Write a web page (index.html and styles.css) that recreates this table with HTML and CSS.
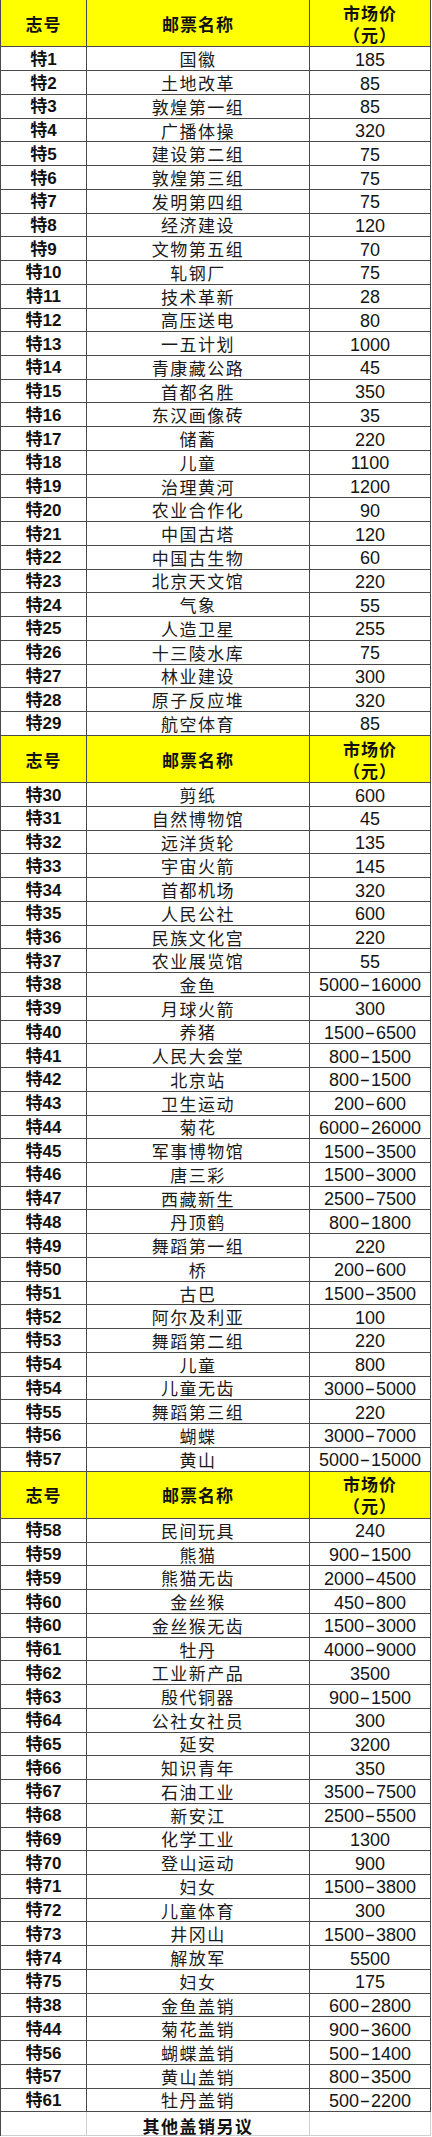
FILE: index.html
```html
<!DOCTYPE html>
<html lang="zh-CN">
<head>
<meta charset="utf-8">
<title>特字头邮票市场价</title>
<link rel="stylesheet" href="styles.css">
</head>
<body>
<div class="sheet">
  <div class="cell head">志号</div><div class="cell head">邮票名称</div><div class="cell head head-price"><span>市场价</span><span>（元）</span></div>
  <div class="cell code">特1</div><div class="cell name">国徽</div><div class="cell price">185</div>
  <div class="cell code">特2</div><div class="cell name">土地改革</div><div class="cell price">85</div>
  <div class="cell code">特3</div><div class="cell name">敦煌第一组</div><div class="cell price">85</div>
  <div class="cell code">特4</div><div class="cell name">广播体操</div><div class="cell price">320</div>
  <div class="cell code">特5</div><div class="cell name">建设第二组</div><div class="cell price">75</div>
  <div class="cell code">特6</div><div class="cell name">敦煌第三组</div><div class="cell price">75</div>
  <div class="cell code">特7</div><div class="cell name">发明第四组</div><div class="cell price">75</div>
  <div class="cell code">特8</div><div class="cell name">经济建设</div><div class="cell price">120</div>
  <div class="cell code">特9</div><div class="cell name">文物第五组</div><div class="cell price">70</div>
  <div class="cell code">特10</div><div class="cell name">轧钢厂</div><div class="cell price">75</div>
  <div class="cell code">特11</div><div class="cell name">技术革新</div><div class="cell price">28</div>
  <div class="cell code">特12</div><div class="cell name">高压送电</div><div class="cell price">80</div>
  <div class="cell code">特13</div><div class="cell name">一五计划</div><div class="cell price">1000</div>
  <div class="cell code">特14</div><div class="cell name">青康藏公路</div><div class="cell price">45</div>
  <div class="cell code">特15</div><div class="cell name">首都名胜</div><div class="cell price">350</div>
  <div class="cell code">特16</div><div class="cell name">东汉画像砖</div><div class="cell price">35</div>
  <div class="cell code">特17</div><div class="cell name">储蓄</div><div class="cell price">220</div>
  <div class="cell code">特18</div><div class="cell name">儿童</div><div class="cell price">1100</div>
  <div class="cell code">特19</div><div class="cell name">治理黄河</div><div class="cell price">1200</div>
  <div class="cell code">特20</div><div class="cell name">农业合作化</div><div class="cell price">90</div>
  <div class="cell code">特21</div><div class="cell name">中国古塔</div><div class="cell price">120</div>
  <div class="cell code">特22</div><div class="cell name">中国古生物</div><div class="cell price">60</div>
  <div class="cell code">特23</div><div class="cell name">北京天文馆</div><div class="cell price">220</div>
  <div class="cell code">特24</div><div class="cell name">气象</div><div class="cell price">55</div>
  <div class="cell code">特25</div><div class="cell name">人造卫星</div><div class="cell price">255</div>
  <div class="cell code">特26</div><div class="cell name">十三陵水库</div><div class="cell price">75</div>
  <div class="cell code">特27</div><div class="cell name">林业建设</div><div class="cell price">300</div>
  <div class="cell code">特28</div><div class="cell name">原子反应堆</div><div class="cell price">320</div>
  <div class="cell code">特29</div><div class="cell name">航空体育</div><div class="cell price">85</div>

  <div class="cell head">志号</div><div class="cell head">邮票名称</div><div class="cell head head-price"><span>市场价</span><span>（元）</span></div>
  <div class="cell code">特30</div><div class="cell name">剪纸</div><div class="cell price">600</div>
  <div class="cell code">特31</div><div class="cell name">自然博物馆</div><div class="cell price">45</div>
  <div class="cell code">特32</div><div class="cell name">远洋货轮</div><div class="cell price">135</div>
  <div class="cell code">特33</div><div class="cell name">宇宙火箭</div><div class="cell price">145</div>
  <div class="cell code">特34</div><div class="cell name">首都机场</div><div class="cell price">320</div>
  <div class="cell code">特35</div><div class="cell name">人民公社</div><div class="cell price">600</div>
  <div class="cell code">特36</div><div class="cell name">民族文化宫</div><div class="cell price">220</div>
  <div class="cell code">特37</div><div class="cell name">农业展览馆</div><div class="cell price">55</div>
  <div class="cell code">特38</div><div class="cell name">金鱼</div><div class="cell price">5000<span class="dash">-</span>16000</div>
  <div class="cell code">特39</div><div class="cell name">月球火箭</div><div class="cell price">300</div>
  <div class="cell code">特40</div><div class="cell name">养猪</div><div class="cell price">1500<span class="dash">-</span>6500</div>
  <div class="cell code">特41</div><div class="cell name">人民大会堂</div><div class="cell price">800<span class="dash">-</span>1500</div>
  <div class="cell code">特42</div><div class="cell name">北京站</div><div class="cell price">800<span class="dash">-</span>1500</div>
  <div class="cell code">特43</div><div class="cell name">卫生运动</div><div class="cell price">200<span class="dash">-</span>600</div>
  <div class="cell code">特44</div><div class="cell name">菊花</div><div class="cell price">6000<span class="dash">-</span>26000</div>
  <div class="cell code">特45</div><div class="cell name">军事博物馆</div><div class="cell price">1500<span class="dash">-</span>3500</div>
  <div class="cell code">特46</div><div class="cell name">唐三彩</div><div class="cell price">1500<span class="dash">-</span>3000</div>
  <div class="cell code">特47</div><div class="cell name">西藏新生</div><div class="cell price">2500<span class="dash">-</span>7500</div>
  <div class="cell code">特48</div><div class="cell name">丹顶鹤</div><div class="cell price">800<span class="dash">-</span>1800</div>
  <div class="cell code">特49</div><div class="cell name">舞蹈第一组</div><div class="cell price">220</div>
  <div class="cell code">特50</div><div class="cell name">桥</div><div class="cell price">200<span class="dash">-</span>600</div>
  <div class="cell code">特51</div><div class="cell name">古巴</div><div class="cell price">1500<span class="dash">-</span>3500</div>
  <div class="cell code">特52</div><div class="cell name">阿尔及利亚</div><div class="cell price">100</div>
  <div class="cell code">特53</div><div class="cell name">舞蹈第二组</div><div class="cell price">220</div>
  <div class="cell code">特54</div><div class="cell name">儿童</div><div class="cell price">800</div>
  <div class="cell code">特54</div><div class="cell name">儿童无齿</div><div class="cell price">3000<span class="dash">-</span>5000</div>
  <div class="cell code">特55</div><div class="cell name">舞蹈第三组</div><div class="cell price">220</div>
  <div class="cell code">特56</div><div class="cell name">蝴蝶</div><div class="cell price">3000<span class="dash">-</span>7000</div>
  <div class="cell code">特57</div><div class="cell name">黄山</div><div class="cell price">5000<span class="dash">-</span>15000</div>

  <div class="cell head">志号</div><div class="cell head">邮票名称</div><div class="cell head head-price"><span>市场价</span><span>（元）</span></div>
  <div class="cell code">特58</div><div class="cell name">民间玩具</div><div class="cell price">240</div>
  <div class="cell code">特59</div><div class="cell name">熊猫</div><div class="cell price">900<span class="dash">-</span>1500</div>
  <div class="cell code">特59</div><div class="cell name">熊猫无齿</div><div class="cell price">2000<span class="dash">-</span>4500</div>
  <div class="cell code">特60</div><div class="cell name">金丝猴</div><div class="cell price">450<span class="dash">-</span>800</div>
  <div class="cell code">特60</div><div class="cell name">金丝猴无齿</div><div class="cell price">1500<span class="dash">-</span>3000</div>
  <div class="cell code">特61</div><div class="cell name">牡丹</div><div class="cell price">4000<span class="dash">-</span>9000</div>
  <div class="cell code">特62</div><div class="cell name">工业新产品</div><div class="cell price">3500</div>
  <div class="cell code">特63</div><div class="cell name">殷代铜器</div><div class="cell price">900<span class="dash">-</span>1500</div>
  <div class="cell code">特64</div><div class="cell name">公社女社员</div><div class="cell price">300</div>
  <div class="cell code">特65</div><div class="cell name">延安</div><div class="cell price">3200</div>
  <div class="cell code">特66</div><div class="cell name">知识青年</div><div class="cell price">350</div>
  <div class="cell code">特67</div><div class="cell name">石油工业</div><div class="cell price">3500<span class="dash">-</span>7500</div>
  <div class="cell code">特68</div><div class="cell name">新安江</div><div class="cell price">2500<span class="dash">-</span>5500</div>
  <div class="cell code">特69</div><div class="cell name">化学工业</div><div class="cell price">1300</div>
  <div class="cell code">特70</div><div class="cell name">登山运动</div><div class="cell price">900</div>
  <div class="cell code">特71</div><div class="cell name">妇女</div><div class="cell price">1500<span class="dash">-</span>3800</div>
  <div class="cell code">特72</div><div class="cell name">儿童体育</div><div class="cell price">300</div>
  <div class="cell code">特73</div><div class="cell name">井冈山</div><div class="cell price">1500<span class="dash">-</span>3800</div>
  <div class="cell code">特74</div><div class="cell name">解放军</div><div class="cell price">5500</div>
  <div class="cell code">特75</div><div class="cell name">妇女</div><div class="cell price">175</div>
  <div class="cell code">特38</div><div class="cell name">金鱼盖销</div><div class="cell price">600<span class="dash">-</span>2800</div>
  <div class="cell code">特44</div><div class="cell name">菊花盖销</div><div class="cell price">900<span class="dash">-</span>3600</div>
  <div class="cell code">特56</div><div class="cell name">蝴蝶盖销</div><div class="cell price">500<span class="dash">-</span>1400</div>
  <div class="cell code">特57</div><div class="cell name">黄山盖销</div><div class="cell price">800<span class="dash">-</span>3500</div>
  <div class="cell code">特61</div><div class="cell name">牡丹盖销</div><div class="cell price">500<span class="dash">-</span>2200</div>
  <div class="cell foot"></div><div class="cell foot note">其他盖销另议</div><div class="cell foot"></div>
</div>
</body>
</html>
```
FILE: styles.css
```css
html, body {
  margin: 0;
  padding: 0;
  background: #ffffff;
}

.sheet {
  display: grid;
  grid-template-columns: 86px 223px 121px;
  grid-auto-rows: 23.74px;
  width: 430px;
  border-left: 1px solid #4a4a4a;
  color: #111;
  font-family: "Liberation Sans", "Noto Sans CJK SC", sans-serif;
}

.cell {
  box-sizing: border-box;
  display: flex;
  align-items: center;
  justify-content: center;
  border-right: 1px solid #4a4a4a;
  border-bottom: 1px solid #4a4a4a;
  white-space: nowrap;
  line-height: 18px;
}

.head {
  grid-row: span 2;
  background: #ffff00;
  font-family: "Noto Sans CJK SC", sans-serif;
  font-weight: 700;
  font-size: 17px;
  letter-spacing: 1px;
  padding-top: 1px;
}

.head-price {
  flex-direction: column;
  line-height: 22px;
}

.code {
  font-weight: 700;
  font-size: 17px;
  padding-top: 2px;
}

.name {
  font-family: "Noto Sans CJK SC", sans-serif;
  font-size: 17px;
  letter-spacing: 1.5px;
  color: #1a1a1a;
  padding-top: 1px;
}

.price {
  font-size: 18px;
  color: #151515;
  padding-top: 2px;
}

.dash {
  display: inline-block;
  width: 12px;
  text-align: center;
  transform: scaleX(1.8);
}

.foot {
  border-right-color: #cfcfcf;
  border-bottom-color: #cfcfcf;
}

.note {
  font-family: "Noto Sans CJK SC", sans-serif;
  font-weight: 700;
  font-size: 17px;
  letter-spacing: 1.5px;
  padding-top: 4px;
}
```
